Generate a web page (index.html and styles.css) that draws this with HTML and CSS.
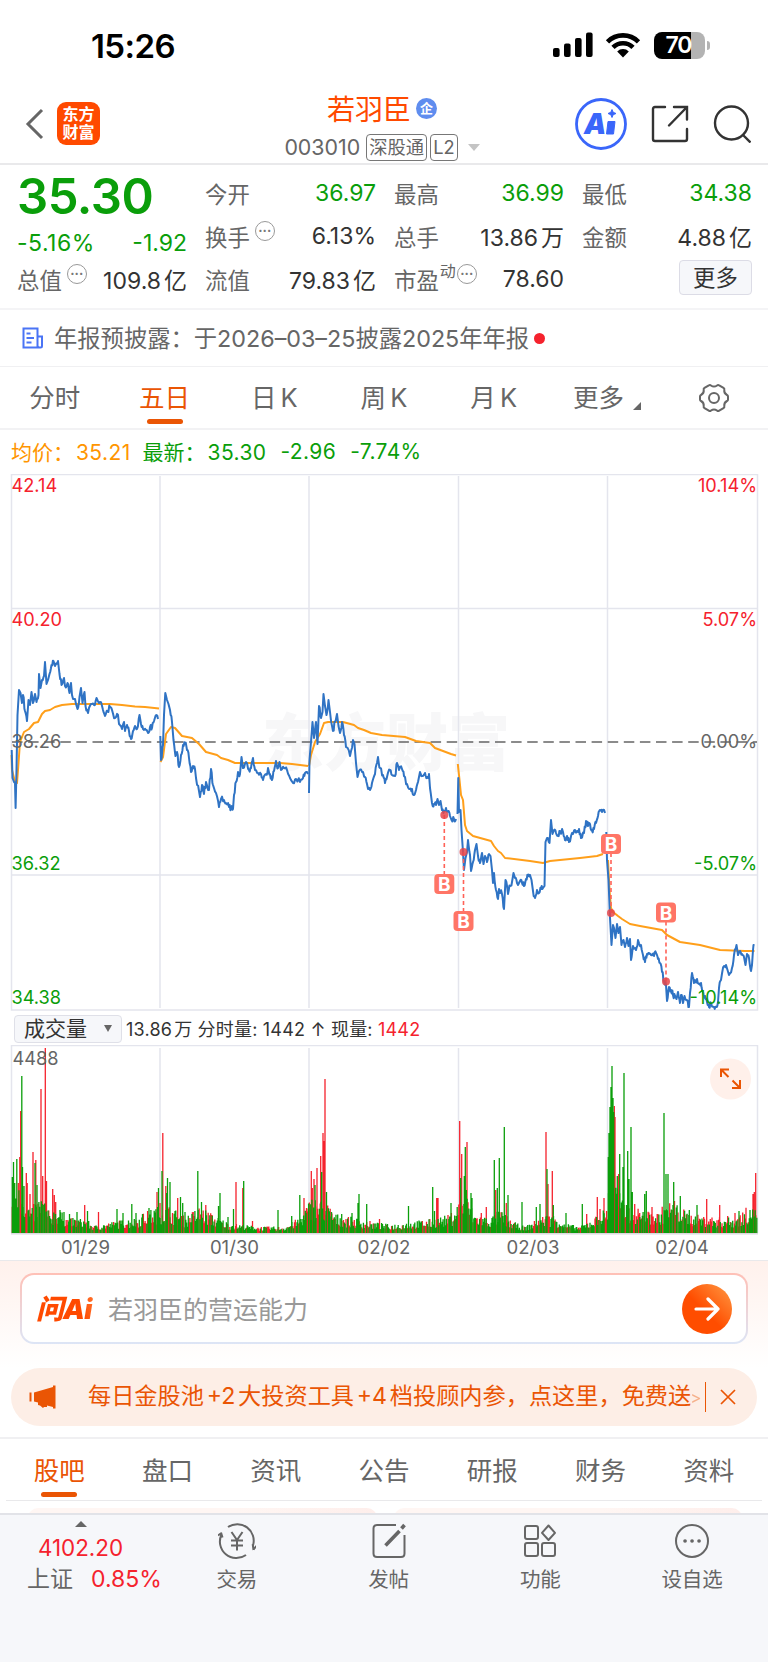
FILE: index.html
```html
<!DOCTYPE html>
<html lang="zh-CN">
<head>
    <meta charset="UTF-8">
    <meta name="viewport" content="width=device-width, initial-scale=1.0">
    <title>若羽臣 003010</title>
    <link rel="stylesheet" href="styles.css">
</head>
<body>

<div class="status-bar">
    <span class="time">15:26</span>
    <div class="status-icons">
        <svg width="40" height="26" viewBox="0 0 40 26">
            <rect x="0" y="16" width="6.6" height="9" rx="2"/>
            <rect x="11" y="11.500" width="6.600" height="13.500" rx="2"/>
            <rect x="22" y="6" width="6.600" height="19" rx="2"/>
            <rect x="33" y="0.500" width="6.600" height="24.500" rx="2"/>
        </svg>
        <svg width="36" height="26" viewBox="0 0 36 26">
            <path d="M2.500 9.800a22 22 0 0 1 31 0M8 15.400a14.200 14.200 0 0 1 20 0" fill="none" stroke="#000" stroke-width="4.600"/>
            <path d="M18 25.500l-5.800-6a8.200 8.200 0 0 1 11.600 0z"/>
        </svg>
        <div class="battery"><span>70</span></div>
    </div>
</div>

<header class="header">
    <div class="header-left">
        <svg width="20" height="32" viewBox="0 0 20 32"><path d="M17 2L3 16l14 14" fill="none" stroke="#666" stroke-width="3"/></svg>
        <div class="logo">东方<br>财富</div>
    </div>
    <div class="header-title">
        <div class="name">若羽臣<span class="badge">企</span></div>
        <div class="code">003010 <span class="tag">深股通</span><span class="tag tag-l2">L2</span><i class="arrow-down"></i></div>
    </div>
    <div class="header-right">
        <svg width="52" height="52" viewBox="0 0 52 52">
            <circle cx="26" cy="26" r="24.500" fill="none" stroke="#3a66fa" stroke-width="2.800"/>
            <text x="9" y="36" class="ai-text">A</text>
            <path d="M33 23.500h7l-1.500 12.500h-7zM37 11.500l1.200 2.800 2.800 1.200-2.800 1.200-1.200 2.800-1.200-2.800-2.800-1.200 2.800-1.200z" fill="#3a66fa" stroke="#3a66fa" stroke-linejoin="round"/>
        </svg>
        <svg width="38" height="38" viewBox="0 0 38 38" fill="none" stroke="#333" stroke-width="2.400" stroke-linecap="round">
            <path d="M14 2H4Q2 2 2 4v30q0 2 2 2h30q2 0 2-2V24M23 2h13v12.500M36 2L18 20.500"/>
        </svg>
        <svg width="38" height="38" viewBox="0 0 38 38" fill="none" stroke="#333" stroke-width="2.400">
            <circle cx="18.500" cy="18" r="16.500"/>
            <path d="M29.500 29.500l8 8"/>
        </svg>
    </div>
</header>

<section class="quote">
    <div class="price-box">
        <div class="price">35.30</div>
        <div class="cell green"><span>-5.16%</span><span>-1.92</span></div>
    </div>
    <div class="cell"><label>今开</label><span class="green">36.97</span></div>
    <div class="cell"><label>最高</label><span class="green">36.99</span></div>
    <div class="cell"><label>最低</label><span class="green">34.38</span></div>
    <div class="cell"><label>换手<i class="more-dot">···</i></label><span>6.13%</span></div>
    <div class="cell"><label>总手</label><span>13.86<em>万</em></span></div>
    <div class="cell"><label>金额</label><span>4.88<em>亿</em></span></div>
    <div class="cell"><label>总值<i class="more-dot">···</i></label><span>109.8<em>亿</em></span></div>
    <div class="cell"><label>流值</label><span>79.83<em>亿</em></span></div>
    <div class="cell"><label>市盈<sup>动</sup><i class="more-dot tight">···</i></label><span>78.60</span></div>
    <div class="cell cell-end"><button class="btn-more">更多</button></div>
</section>

<section class="notice">
    <svg width="22" height="24" viewBox="0 0 22 24" fill="none" stroke="#4a74f5" stroke-width="2">
        <path d="M15.500 20.500V2.500H1.500v19h17q1.500 0 1.500-1.500V10.500h-4.500M15.500 10.500v9q0 2 2 2M4.500 7.500h4M4.500 12h7.500M4.500 16.500h5"/>
    </svg>
    <span class="notice-text">年报预披露：于2026–03–25披露2025年年报</span><i class="red-dot"></i>
</section>

<nav class="period-tabs">
    <a>分时</a>
    <a class="active">五日</a>
    <a>日 K</a>
    <a>周 K</a>
    <a>月 K</a>
    <a>更多<i class="corner"></i></a>
    <a>
        <svg width="32" height="32" viewBox="0 0 32 32" fill="none" stroke="#666" stroke-width="2">
            <path d="M10.800 3.300Q12 2.500 13 3.500q3 2.200 6 0 1-1 2.200-.2l4.300 2.500q1.200.7.800 2.100-.5 3.500 2.700 5.100 1 .5 1 1.600v2.800q0 1.100-1 1.600-3.200 1.600-2.700 5.100.4 1.400-.8 2.100l-4.300 2.500q-1.200.8-2.200-.2-3-2.200-6 0-1 1-2.200.2l-4.300-2.500q-1.200-.7-.8-2.100.5-3.500-2.700-5.100-1-.5-1-1.600v-2.800q0-1.100 1-1.600 3.200-1.600 2.700-5.100-.4-1.400.8-2.100z"/>
            <circle cx="16" cy="16" r="5"/>
        </svg>
    </a>
</nav>

<div class="avg-row">
    <span class="orange">均价：<em>35.21</em></span>
    <span class="green">最新：<em>35.30</em></span>
    <span class="green">-2.96</span>
    <span class="green">-7.74%</span>
</div>

<svg class="chart" width="768" height="538" viewBox="0 474 768 538">
    <text x="262" y="766" class="watermark">东方财富</text>
    <g class="grid">
        <path d="M160 476v532M309 476v532M458.500 476v532M607.500 476v532M11.500 608.500h746M11.500 875h746"/>
        <rect x="11.500" y="474.500" width="746" height="535.500"/>
    </g>
    <path d="M12 742h745" stroke="#666" stroke-width="1.300" stroke-dasharray="10.500 5.600"/>
    <g id="avgLines" class="avg-line"></g>
    <g id="priceLines" class="price-line"></g>
    <g class="axis">
        <text x="11.500" y="491.500" class="up">42.14</text>
        <text x="11.500" y="625.500" class="up">40.20</text>
        <text x="11.500" y="748">38.26</text>
        <text x="11.500" y="869.500" class="down">36.32</text>
        <text x="11.500" y="1003.500" class="down">34.38</text>
        <g text-anchor="end">
            <text x="757" y="491.500" class="up">10.14%</text>
            <text x="757" y="625.500" class="up">5.07%</text>
            <text x="757" y="748">0.00%</text>
            <text x="757" y="869.500" class="down">-5.07%</text>
            <text x="757" y="1003.500" class="down">-10.14%</text>
        </g>
    </g>
    <g id="buyMarks" class="buy"></g>
</svg>

<div class="vol-bar">
    <div class="vol-select"><span>成交量</span><i class="arrow-down dark"></i></div>
    <span class="vol-text">13.86<em>万</em> 分时量: 1442 ↑ 现量: <b>1442</b></span>
</div>

<svg class="chart" width="768" height="215" viewBox="0 1045 768 215">
    <g class="grid">
        <path d="M160 1048v185M309 1048v185M458.500 1048v185M607.500 1048v185"/>
        <path d="M11.500 1233V1045.500h746V1233"/>
    </g>
    <path d="M11 1233.800h747" stroke="#d9dadf" stroke-width="1.600"/>
    <path id="volUp" stroke="#f5222d"/>
    <path id="volDown" stroke="#0a9e0a"/>
    <g class="axis">
        <text x="12.500" y="1065">4488</text>
        <g text-anchor="middle" class="dates">
            <text x="85.500" y="1253.500">01/29</text>
            <text x="234.500" y="1253.500">01/30</text>
            <text x="384" y="1253.500">02/02</text>
            <text x="533" y="1253.500">02/03</text>
            <text x="682" y="1253.500">02/04</text>
        </g>
    </g>
    <circle cx="730.500" cy="1079" r="20.500" fill="#fff0ea"/>
    <path d="M728.500 1077l-7.500-7.500M721 1077v-7.500h8M732.500 1080.500l7.500 7.500M740 1080v8h-8" fill="none" stroke="#ea5504" stroke-width="2"/>
</svg>

<section class="ask">
    <div class="ask-box">
        <span class="ask-logo">问Ai</span>
        <span class="ask-text">若羽臣的营运能力</span>
        <span class="ask-btn">
            <svg width="26" height="30" viewBox="0 0 26 30" fill="none" stroke="#fff" stroke-width="3.200" stroke-linecap="round" stroke-linejoin="round"><path d="M2 15h22M14 5l10 10-10 10"/></svg>
        </span>
    </div>
</section>

<div class="promo">
    <svg width="28" height="26" viewBox="0 0 28 26" fill="#ea5504"><path d="M0.500 8.500h2v9h-2zM5 8.500l19-5.500V1.500h2.500v23H24V23l-6-1.500v1.500h-3l-1 1-3-2.500L9 21v-2.500l-4-1z"/></svg>
    <div class="promo-text">每日金股池 +2 大投资工具 +4 档投顾内参，点这里，免费送<span>&gt;</span></div>
    <svg width="18" height="18" viewBox="0 0 18 18" stroke="#ea5504" stroke-width="1.700"><path d="M2 2l14 14M16 2L2 16"/></svg>
</div>

<nav class="info-tabs">
    <a class="active">股吧</a>
    <a>盘口</a>
    <a>资讯</a>
    <a>公告</a>
    <a>研报</a>
    <a>财务</a>
    <a>资料</a>
</nav>
<div class="peek"><i></i><i></i></div>

<footer class="bottom-bar">
    <div class="index">
        <i class="arrow-up"></i>
        <div class="index-value">4102.20</div>
        <div class="index-row">上证 <span>0.85%</span></div>
    </div>
    <a>
        <svg width="38" height="38" viewBox="0 0 38 38" fill="none" stroke="#666" stroke-width="2">
            <path d="M10 5A16.500 16.500 0 0 1 35 23.500M35.500 28l-.8-6M35.500 27.500l3-3.500M28 33A16.500 16.500 0 0 1 3.500 12.500M3.500 11L0 13.500M3 10.500l1.500 5"/>
            <path d="M13.500 10l5.500 8 5.500-8M19 18v10.500M13 18.500h12M13 23.500h12"/>
        </svg>
        交易
    </a>
    <a>
        <svg width="36" height="38" viewBox="0 0 36 38" fill="none" stroke="#666" stroke-width="2">
            <path d="M25 3H6Q2.500 3 2.500 6.500v25Q2.500 35 6 35h24q3.500 0 3.500-3.500V13"/>
            <path d="M14.500 23.500L28.500 9M30.500 6.500l3-3.500" stroke-width="3.600"/>
        </svg>
        发帖
    </a>
    <a>
        <svg width="34" height="38" viewBox="0 0 34 38" fill="none" stroke="#666" stroke-width="2">
            <rect x="2" y="4" width="13" height="13" rx="2"/>
            <rect x="2" y="21" width="13" height="13" rx="2"/>
            <rect x="19" y="21" width="13" height="13" rx="2"/>
            <path d="M25.500 3.500l6.500 7.300-6.500 7.200-6.500-7.200z" stroke-linejoin="round"/>
        </svg>
        功能
    </a>
    <a>
        <svg width="36" height="38" viewBox="0 0 36 38" fill="none" stroke="#666" stroke-width="2">
            <circle cx="18" cy="19" r="16"/>
            <path d="M11 19h.1M18 19h.1M25 19h.1" stroke-width="3.600" stroke-linecap="round"/>
        </svg>
        设自选
    </a>
</footer>

<script src="chart.js"></script>
</body>
</html>
```
FILE: styles.css
```css
* {
    box-sizing: border-box;
}
body {
    margin: 0;
    width: 768px;
    height: 1662px;
    overflow: hidden;
    background: #fff;
    color: #333;
    font-family: Inter, "Noto Sans CJK SC", sans-serif;
    font-size: 22px;
}
i,
em {
    font-style: normal;
}
svg {
    display: block;
    flex: none;
}
.green {
    color: #0a9e0a !important;
}
.orange {
    color: #ff9500;
}

/* status bar */
.status-bar {
    display: flex;
    justify-content: space-between;
    height: 84px;
    padding: 32px 63px 0 91px;
}
.time {
    color: #000;
    font-size: 33px;
    font-weight: 600;
    line-height: 29px;
    letter-spacing: -0.6px;
}
.status-icons {
    display: flex;
    gap: 12px;
}
.battery {
    position: relative;
    width: 51px;
    height: 27px;
    margin-left: 1px;
    border-radius: 8px;
    background: linear-gradient(90deg, #000 72%, #b3b3b3 72%);
    color: #fff;
    font-size: 23px;
    font-weight: 600;
    line-height: 27px;
    padding-right: 2px;
    text-align: center;
    letter-spacing: -1px;
}
.battery::after {
    content: "";
    position: absolute;
    right: -5px;
    top: 9px;
    width: 3px;
    height: 9px;
    border-radius: 0 4px 4px 0;
    background: #b3b3b3;
}

/* header */
.header {
    display: grid;
    grid-template-columns: 240px 1fr 244px;
    height: 81px;
    border-bottom: 2px solid #e9e9eb;
}
.header-left {
    display: flex;
    align-items: center;
    gap: 12px;
    padding-left: 25px;
}
.logo {
    width: 43px;
    height: 43px;
    border-radius: 9px;
    background: #ff4a00;
    color: #fff;
    font-size: 16px;
    font-weight: 700;
    line-height: 18px;
    padding-top: 3px;
    text-align: center;
}
.header-title {
    text-align: center;
}
.name {
    display: flex;
    justify-content: center;
    align-items: center;
    gap: 5px;
    height: 50px;
    padding-bottom: 2px;
    color: #ff4a00;
    font-size: 28px;
}
.badge {
    width: 21px;
    height: 21px;
    border-radius: 50%;
    background: #5f8def;
    color: #fff;
    font-size: 13px;
    font-weight: 700;
    line-height: 20px;
}
.code {
    display: flex;
    justify-content: center;
    align-items: center;
    height: 26px;
    color: #666;
    font-size: 21.400px;
}
.tag {
    height: 27px;
    margin-left: 6px;
    padding: 0 2px;
    border: 1.500px solid #777;
    border-radius: 4px;
    font-size: 18.300px;
    line-height: 24px;
    white-space: nowrap;
}
.tag-l2 {
    margin-left: 3px;
}
.arrow-down {
    margin-left: 10px;
    border: 6px solid transparent;
    border-top: 7px solid #c4c4c4;
    border-bottom: 0;
}
.header-right {
    display: flex;
    align-items: center;
    justify-content: flex-end;
    gap: 24px;
    padding-right: 17px;
}
.ai-text {
    font-family: Inter, sans-serif;
    font-size: 28px;
    font-weight: 900;
    font-style: italic;
    fill: #3a66fa;
}

/* quote */
.quote {
    display: grid;
    grid-template-columns: 170px 171px 170px 170px;
    grid-template-rows: 43px 43px 43px;
    column-gap: 18px;
    height: 145px;
    padding: 6px 16px 0 17px;
    border-bottom: 2px solid #f4f4f6;
    font-size: 23px;
}
.cell {
    display: flex;
    justify-content: space-between;
    align-items: center;
    white-space: nowrap;
}
.cell label {
    display: flex;
    align-items: center;
    color: #666;
    font-size: 22.400px;
}
.cell em {
    margin-left: 3px;
}
.cell label sup {
    align-self: flex-start;
    font-size: 16px;
    line-height: 16px;
    margin-left: 1px;
}
.price-box {
    grid-row: span 2;
    padding-top: 1px;
}
.price-box .cell span:first-child {
    letter-spacing: 0.5px;
}
.price {
    height: 50px;
    color: #0a9e0a;
    font-size: 49px;
    font-weight: 600;
    line-height: 50px;
    letter-spacing: -0.5px;
}
.price-box .cell {
    height: 41px;
}
.more-dot {
    width: 20px;
    height: 20px;
    margin: -9px 0 0 5px;
    border: 1.500px solid #999;
    border-radius: 50%;
    color: #777;
    font-size: 13px;
    font-weight: 700;
    line-height: 16px;
    text-align: center;
}
.more-dot.tight {
    margin-left: 1px;
}
.cell-end {
    justify-content: flex-end;
}
.btn-more {
    width: 73px;
    height: 35px;
    margin-top: -2px;
    padding: 0;
    border: 1.500px solid #dcdce6;
    border-radius: 4px;
    background: #f6f7fa;
    color: #333;
    font: inherit;
    font-size: 22.400px;
    line-height: 30px;
}

/* notice */
.notice {
    display: flex;
    align-items: center;
    height: 57px;
    padding-left: 22px;
    border-bottom: 1px solid #f0f0f2;
    color: #666;
    font-size: 23.300px;
}
.notice-text {
    margin-left: 10px;
    padding-bottom: 3px;
    white-space: nowrap;
}
.red-dot {
    width: 11px;
    height: 11px;
    margin-left: 5px;
    border-radius: 50%;
    background: #f5222d;
}

/* tabs */
.period-tabs,
.info-tabs {
    display: grid;
    grid-template-columns: repeat(7, 1fr);
    color: #666;
    font-size: 25.500px;
    word-spacing: -3px;
}
.period-tabs {
    height: 63px;
    border-bottom: 2px solid #f2f2f4;
}
.period-tabs a,
.info-tabs a {
    position: relative;
    display: flex;
    justify-content: center;
    align-items: center;
    padding-bottom: 4px;
}
.period-tabs a:last-child {
    padding-bottom: 0;
    padding-left: 1px;
}
.period-tabs .active,
.info-tabs .active {
    color: #ea5504;
}
.active::after {
    content: "";
    position: absolute;
    bottom: 4px;
    left: calc(50% - 18px);
    width: 36px;
    height: 5px;
    border-radius: 3px;
    background: #ea5504;
}
.corner {
    align-self: flex-end;
    margin: 0 -7px 14px 9px;
    border-left: 8px solid transparent;
    border-bottom: 8px solid #666;
}

.avg-row {
    display: flex;
    align-items: center;
    gap: 14px;
    height: 44px;
    padding: 0 0 2px 11px;
    font-size: 21px;
}
.avg-row em {
    margin-left: 2px;
    letter-spacing: 0.4px;
}
.avg-row span:nth-child(2) {
    margin-left: -2px;
}
.avg-row span:nth-child(n+3) {
    letter-spacing: 0.4px;
}

/* charts */
.grid * {
    fill: none;
    stroke: #e4e5ed;
    stroke-width: 1.500px;
}
.axis {
    font-size: 18.200px;
    fill: #666;
}
.axis .up {
    fill: #f5222d;
}
.axis .down {
    fill: #0a9e0a;
}
.axis .dates {
    font-size: 18.600px;
}
.watermark {
    font-size: 62px;
    font-weight: 900;
    fill: #f7f7f8;
}
.avg-line,
.price-line {
    fill: none;
    stroke: #ff9f1a;
    stroke-width: 2px;
    stroke-linejoin: round;
}
.price-line {
    stroke: #2f73c4;
}
.buy rect {
    fill: #ff7566;
}
.buy text {
    fill: #fff;
    font-size: 19px;
    font-weight: 700;
    text-anchor: middle;
}
.buy circle {
    fill: #e8474a;
    fill-opacity: 0.85;
}
.buy path {
    stroke: #ff6257;
    stroke-width: 1.600px;
    stroke-dasharray: 4 3;
}
.vol-bar {
    display: flex;
    align-items: center;
    height: 33px;
    padding-left: 14px;
    gap: 4px;
    font-size: 18px;
    white-space: nowrap;
}
.vol-text {
    padding-bottom: 2px;
    letter-spacing: 0.2px;
}
.vol-text em {
    margin-left: 2px;
}
.vol-bar b {
    color: #f5222d;
    font-weight: 400;
}
.vol-select {
    display: flex;
    align-items: center;
    width: 108px;
    height: 28px;
    padding-left: 9px;
    border: 1.500px solid #dfe0e8;
    border-radius: 4px;
    background: #f6f7fa;
    font-size: 21px;
}
.vol-select span {
    padding-bottom: 3px;
}
.arrow-down.dark {
    margin-left: 17px;
    border-width: 7px 4.500px 0;
    border-top-color: #666;
}
#volUp,
#volDown {
    stroke-width: 1.300px;
}

/* ask */
.ask {
    height: 108px;
    padding: 12px 20px;
    border-top: 1px solid #e9e9eb;
    background: linear-gradient(#fff1ec, #fff);
}
.ask-box {
    display: flex;
    align-items: center;
    height: 71px;
    padding: 0 14px;
    border: 2px solid transparent;
    border-radius: 14px;
    background: linear-gradient(#fff, #fff) padding-box, linear-gradient(#ffc0b6, #dce5f6) border-box;
}
.ask-logo {
    width: 72px;
    padding-bottom: 3px;
    font-size: 27.500px;
    font-weight: 900;
    font-style: italic;
    letter-spacing: -0.6px;
    background: linear-gradient(75deg, #ff4a00 60%, #ff9a5a);
    -webkit-background-clip: text;
    color: transparent;
}
.ask-text {
    flex: 1;
    padding-bottom: 2px;
    color: #999;
    font-size: 25px;
}
.ask-btn {
    display: flex;
    align-items: center;
    justify-content: center;
    width: 50px;
    height: 50px;
    border-radius: 50%;
    background: linear-gradient(45deg, #ff4d00 45%, #ff9b45);
}

/* promo */
.promo {
    display: flex;
    align-items: center;
    height: 58px;
    margin: 0 11px 11px;
    padding: 0 20px 0 18px;
    border-radius: 29px;
    background: #fdeee6;
    color: #ea5504;
    font-size: 23.200px;
}
.promo-text {
    flex: 1;
    margin: 0 13px 0 31px;
    border-right: 1.500px solid #ea5504;
    line-height: 28px;
    white-space: nowrap;
    word-spacing: -3.800px;
}
.promo-text span {
    display: inline-block;
    margin-left: -1px;
    font-size: 17px;
    opacity: 0.4;
}

.info-tabs {
    height: 64px;
    padding: 0 5px;
    border-top: 2px solid #f0f0f2;
    background: linear-gradient(#e9e9eb, #e9e9eb) 6px 100% / 756px 1px no-repeat;
}
.peek {
    display: flex;
    gap: 17px;
    height: 12px;
    padding: 7px 26px 0 28px;
    overflow: hidden;
}
.peek i {
    flex: 1;
    height: 20px;
    border-radius: 10px;
    background: linear-gradient(90deg, #fff6f3 60%, #feeeeb);
}

/* bottom bar */
.bottom-bar {
    display: grid;
    grid-template-columns: 161px repeat(4, 1fr);
    height: 149px;
    border-top: 2px solid #e2e3e8;
    background: #f6f7fa;
    color: #666;
    font-size: 20.500px;
}
.bottom-bar a {
    display: flex;
    flex-direction: column;
    align-items: center;
    padding-top: 7px;
    line-height: 36px;
}
.bottom-bar a svg {
    margin-bottom: 2px;
}
.index {
    display: flex;
    flex-direction: column;
    align-items: center;
    padding-top: 6px;
    font-size: 22.400px;
}
.arrow-up {
    border: 6px solid transparent;
    border-bottom: 6px solid #666;
    border-top: 0;
}
.index-value {
    color: #f5222d;
    line-height: 30px;
    margin-top: 6px;
}
.index-row {
    display: flex;
    gap: 18px;
    padding-left: 27px;
    align-self: flex-start;
    font-size: 23px;
    line-height: 32px;
    white-space: nowrap;
}
.index-row span {
    color: #f5222d;
}
```
FILE: chart.js
```js
// intraday price, one array per trading day: x, y, x, y, ...
const price = [
    [11.7,750,12.5,778,14,782,15,783,15.6,808,16.5,770,17.5,715,19,690,20.5,693,22,703,23,695,25,711,27,721,28.5,700,30,705,31.5,692,33,703,35,694,36.5,702,38.5,695,39,674,40.5,688,42,680,44,676,45,662,46.5,684,48,680,49.5,674,51.5,665,53.5,661,55,666,58,661,59.5,674,61.5,685,64,678,65,686,67.5,683,69.5,693,71,683,72,695,75,699,77.5,709,79.5,697,81,688,82.5,703,84.5,692,85.5,706,88,713,91,704,94,705,96.5,698,100,702,103,710,105,716,107.5,711,110,707,112,710,115,718,118,715,119,724,122,729,124,722,125,731,127,725,129,731,131,739,133,731,135,726,137,729,139.5,715,141,724,143,729,146,730,148,733,150,727,152,728,154,721,155.5,716,158,719],
    [160.3,736,161,760,163,745,164,715,165.3,693,167,700,168.5,704,170,710,172,722,173.5,740,175.5,756,177,752,179,767,181,755,183,745,185,743,187,750,189,758,191,772,193,766,195,769,196,778,199,791,200,797,202,785,204,794,206,782,209,790,211,769,213,785,216,793,219,807,221,799,224,800,226,803,229,807,231,808,233,809,234,795,236,782,238,772,240,774,241.5,757,243,768,246,762,249,770,251,768,253,758,255,770,258,773,261,774,263,780,266,774,268,768,270,774,272,780,274,771,276,761,278,768,279.5,762,281,770,284,768,287,770,290,778,293,783,296,779,300,782,303,778,305,773,308,774],
    [309,793,309.5,760,311,742,312.5,722,314,738,316,722,317.5,744,319,706,321,718,322.5,712,323.5,694,325,706,326.5,715,328.5,700,330,712,333,731,335,722,337,714,338.5,726,340,733,342,722,344,735,346,747,350,756,353,740,354.5,744,356,763,357.5,777,359,771,362,772,365,777,367,784,370,790,372,783,375,774,377,763,378,757,380,768,383,775,385,783,387,777,390,770,392,775,395,776,397,763,399,770,402,769,404,776,407,784,410,789,412,789,414,795,416,790,418,782,420,772,422,776,425,773,427,777,429,774,430,788,432,803,434,804,436,805,437.5,799,439,805,440.5,801,442,810,444,811,446,808,448,811,450,816,451.5,820,454,819,456,819],
    [457.5,814,458.3,778,459,812,460.5,810,461.5,830,463,852,464,870,465.5,858,467,852,468,840,470,855,471,871,473,862,475,850,476.5,844,478,856,480,863,482,853,483.5,864,485,856,487,862,489,854,490.5,856,492,870,493,883,494,873,496,890,498,899,499,889,502,894,504,909,505.5,880,508,894,510,886,512,882,513.5,873,515,878,517,883,520,881,522,883,524,886,526,879,528,876,530,875,531.5,880,533,891,535,898,537,890,539,893,541,889,543,888,544.5,886,545.5,842,547,838,549.5,843,551,820,552.5,834,554,830,556,833,558,836,560,831,563,832,565,840,567,836,569,842,572,833,575,830,577,831,579,829,581,838,584,833,586,821,588,826,590,824,592,830,594,829,596,823,598,816,600,810,602,812,605,813],
    [606.3,832,607,860,608.5,880,610,918,611.5,945,613,925,614,928,615.5,938,617,924,618.5,933,620,927,621.5,945,623.5,940,625,947,627,938,628.5,946,630,939,631,960,633,946,636,950,638,940,641,945,643,955,645,962,647,954,649,953,651,955,654,956,656,953,658,959,660,963,662,972,664,981,666,985,667,1001,669,987,671,990,673,995,675,996,676.5,999,678,992,680,1003,681,995,683,1003,684.5,996,687,1000,689,1007,690,993,692,973,694,983,697,979,699,984,701,983,703,992,705,996,707,1002,709,1007,711,1003,714,1007,716,1007,718,1002,719,988,721,980,724,966,726,965,727.5,970,729,975,732,968,734,955,736.5,945,738,955,740,951,742,954,744,957,745.5,965,747,954,749,958,751,971,752,965,753,950,753.5,945,754.5,945]
];

const average = [
    [11.5,755,12,770,15,782,17,783,18,770,20,742,24,732,29,729,34,723,38,722,42,714,45,711,50,710,55,707,62,705,72,704,110,704,122,705,135,706.5,145,707,159,708.5],
    [160.5,762,163,757,166,734,171,727,175,728,182,736,192,738,199,744,206,752,217,755,221,758,228,760,235,763,280,763,292,764,308,766],
    [309,766,311,755,315,742,320,734,324,723,328,722,343,722,354,725,358,728,364,730,371,733,382,735,405,737,416,741,430,743,435,748,443,751,451,754,456,755.5],
    [457.8,764,459,775,461,795,463,800,465,825,467,831,473,836,491,841,494,846,498,851,501,853,505,858,530,861,543,863,550,861,580,858,597,856,603,854],
    [608,860,609.5,890,611,908,613,912,618,916,622,919,630,924,640,926,662,930,667,935,680,942,700,945,720,950,745,951,754.5,951]
];

// buy marks: x, y of the trade, y of the label
const buys = [[444.3,815,884], [463.5,852,921], [611,913,844], [666,981.5,912.5]];

// tallest volume bars: x, top
const downBars = [[12.3,1177],[13.5,1162],[14.7,1183],[16.8,1159],[21.8,1076],[22.5,1167],[24,1186],[35,1163],[37,1185],[60,1210],[64,1212],[69.5,1214],[77,1212],[87.5,1211],[117,1209],[123,1213],[131.8,1204],[136,1213],[142.5,1214],[149,1208],[158.5,1188],[162,1171],[166.7,1193],[167.5,1178],[170,1182],[180.5,1197],[182.7,1203],[185,1212],[192,1214],[197.8,1171],[201.5,1202],[218.5,1206],[220,1193],[228,1217],[233.5,1209],[243.7,1181],[278,1210],[291.7,1216],[299.8,1195],[315,1185],[321.7,1172],[326.5,1192],[331.5,1212],[341.7,1214],[352,1213],[358,1203],[359,1194],[366.7,1204],[408.5,1206],[432.7,1187],[434.5,1211],[451,1203],[460.7,1178],[464.3,1176],[465.3,1147],[466.3,1190],[471,1193],[472,1198],[494.3,1160],[497.3,1188],[499.3,1158],[504.3,1127],[508,1195],[522,1202],[536.3,1207],[540,1204],[547,1169],[553.3,1205],[566,1213],[582.3,1204],[608.3,1157],[609,1133],[610,1107],[611,1087],[612,1066],[613,1098],[613.7,1112],[617.3,1176],[619.7,1154],[623,1167],[624,1073],[627.7,1151],[629,1179],[631,1127],[632.3,1192],[644.7,1194],[646.3,1191],[664,1113],[666,1174],[668,1174],[673.7,1182],[680.3,1196],[689.3,1210],[697,1205],[739,1211],[750,1210]];
const upBars = [[18.3,1183],[19.8,1157],[20.7,1111],[26.3,1173],[27.2,1183],[30,1194],[33,1152],[35.8,1160],[41,1089],[42.7,1176],[45.3,1048],[46.5,1181],[52.7,1189],[54.3,1195],[55.7,1202],[84.7,1205],[98.5,1212],[157,1192],[160,1203],[162.8,1133],[165.8,1186],[177.7,1198],[205.8,1205],[212,1215],[236,1182],[242.8,1188],[252.5,1221],[304,1198],[306.5,1208],[311.3,1171],[312.3,1188],[314,1179],[317,1168],[320.7,1156],[323,1133],[324,1141],[325,1079],[379.5,1219],[436.7,1198],[438,1198],[459.7,1121],[461.7,1154],[467,1142],[481.3,1213],[486.3,1207],[495.7,1190],[506.3,1203],[546,1132],[548,1184],[552.3,1171],[586.7,1214],[597.3,1197],[600,1209],[604,1198],[614.3,1106],[615,1117],[618.7,1174],[634.7,1204],[639.7,1213],[652,1207],[674.5,1201],[706.7,1199],[719.7,1205],[727.7,1216],[735,1213],[753,1194],[754.3,1192],[755.7,1173]];

// usual bar height along the x axis
const level = [[12,46],[24,40],[30,22],[42,36],[50,18],[56,24],[68,14],[85,13],[95,7],[115,11],[135,14],[155,24],[170,25],[185,15],[200,25],[215,16],[230,9],[260,6],[285,6],[300,15],[312,34],[327,28],[335,18],[350,15],[375,10],[390,8],[430,13],[450,17],[465,38],[475,18],[490,14],[500,22],[512,11],[525,6],[545,17],[555,17],[565,9],[580,6],[595,15],[607,24],[611,85],[616,56],[622,30],[632,26],[645,20],[658,19],[668,32],[690,18],[710,15],[735,14],[757,32]];

let seed = 7;
function rand() {
    seed = (seed * 16807) % 2147483647;
    return seed / 2147483647;
}

function line(p, noise) {
    let d = 'M' + p[0] + ' ' + p[1];
    for (let i = 2; i < p.length; i += 2) {
        const dx = p[i] - p[i - 2];
        const dy = p[i + 1] - p[i - 1];
        // small tick noise between wider spaced quotes
        if (noise && dx >= 2) {
            d += 'L' + (p[i - 2] + dx * 0.35) + ' ' + (p[i - 1] + dy * 0.35 + rand() * 6 - 3);
            d += 'L' + (p[i - 2] + dx * 0.7) + ' ' + (p[i - 1] + dy * 0.7 + rand() * 6 - 3);
        }
        d += 'L' + p[i] + ' ' + p[i + 1];
    }
    return '<path d="' + d + '"/>';
}

function levelAt(x) {
    for (let i = 1; i < level.length; i++) {
        if (x <= level[i][0]) {
            const a = level[i - 1], b = level[i];
            return a[1] + (b[1] - a[1]) * (x - a[0]) / (b[0] - a[0]);
        }
    }
    return 10;
}

document.getElementById('avgLines').innerHTML = average.map(p => line(p, false)).join('');
document.getElementById('priceLines').innerHTML = price.map(p => line(p, true)).join('');

document.getElementById('buyMarks').innerHTML = buys.map(([x, y, ly]) => `
    <path d="M${x} ${y}V${ly}"/>
    <circle cx="${x}" cy="${y}" r="4"/>
    <rect x="${x - 10}" y="${ly - 10}" width="20" height="20" rx="4"/>
    <text x="${x}" y="${ly + 7}">B</text>`).join('');

const bottom = 1233;
let up = '', down = '';
for (let x = 12.3; x < 757; x += 0.83) {
    const top = bottom - levelAt(x) * (0.35 + rand() * 0.75);
    const bar = `M${x.toFixed(1)} ${bottom}V${top.toFixed(1)}`;
    if (rand() < 0.42) up += bar;
    else down += bar;
}
upBars.forEach(([x, y]) => up += `M${x} ${bottom}V${y}`);
downBars.forEach(([x, y]) => down += `M${x} ${bottom}V${y}`);
document.getElementById('volUp').setAttribute('d', up);
document.getElementById('volDown').setAttribute('d', down);
```
